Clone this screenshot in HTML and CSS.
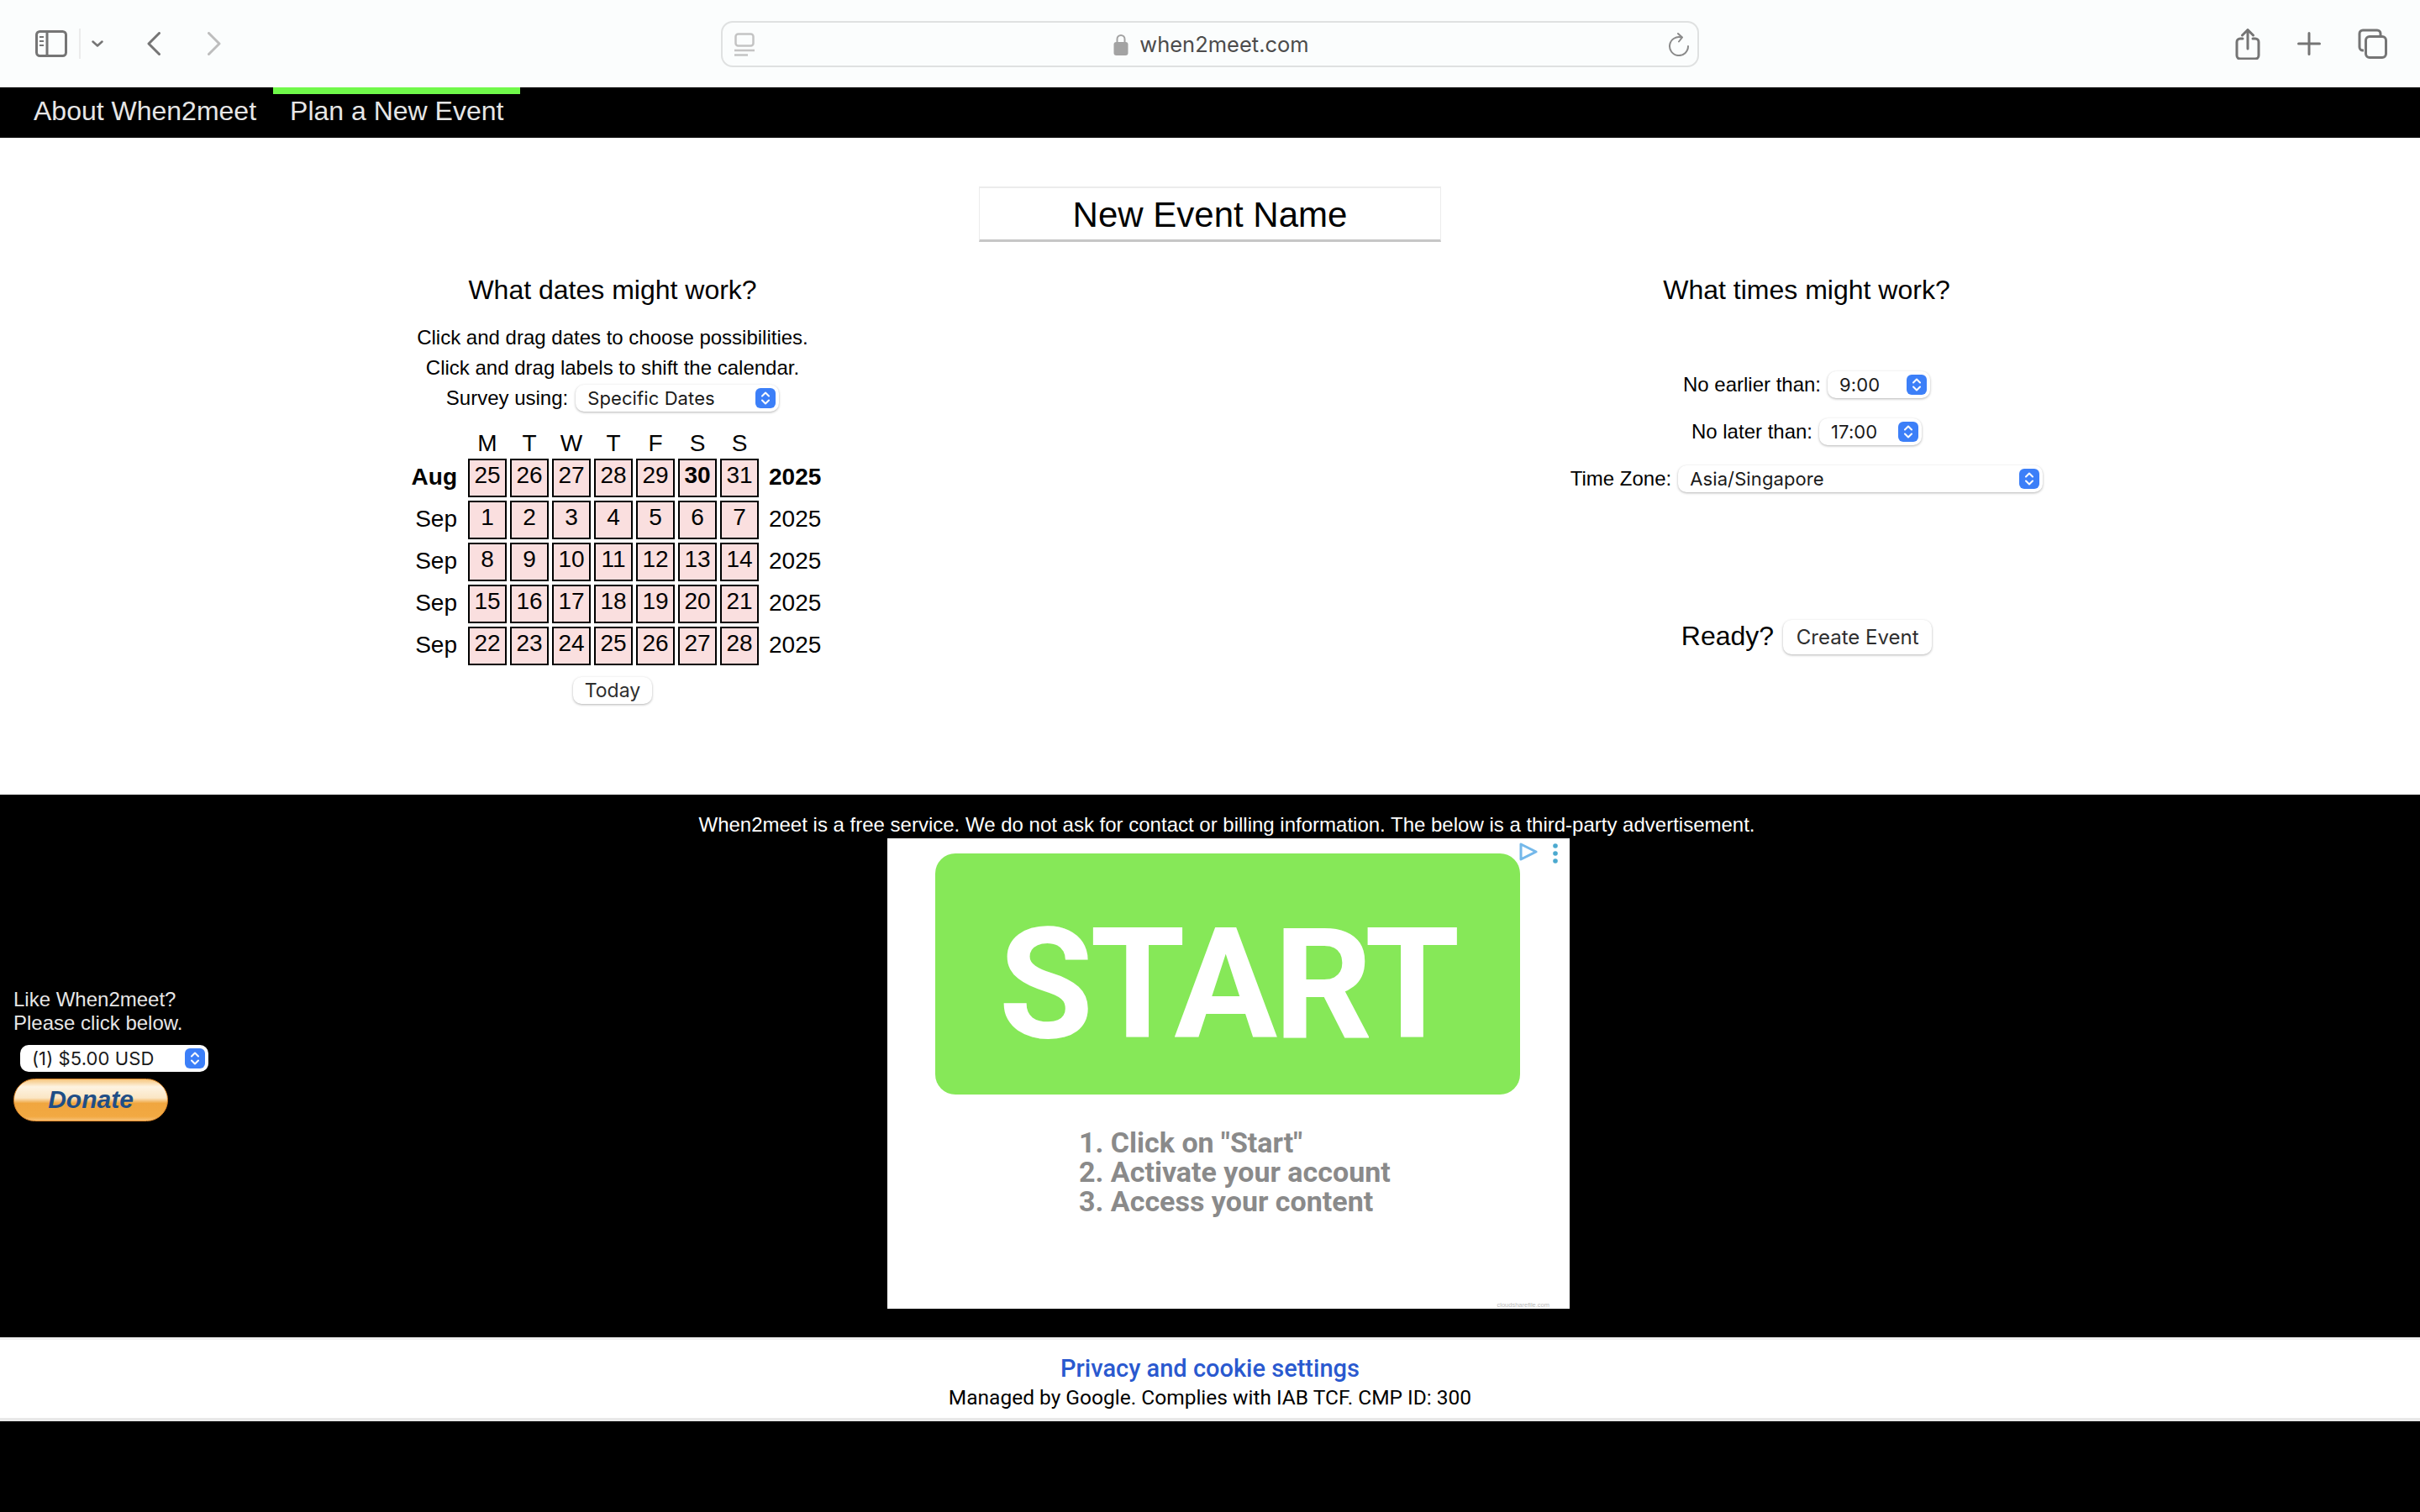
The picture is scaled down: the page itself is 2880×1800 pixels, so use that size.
FILE: index.html
```html
<!DOCTYPE html>
<html lang="en">
<head>
    <meta charset="UTF-8">
    <title>When2meet</title>
    <link rel="stylesheet" href="styles.css">
</head>
<body>
    <!-- browser toolbar -->
    <header class="toolbar">
        <div class="tool-left">
            <svg class="ico-sidebar" width="38" height="32" viewBox="0 0 38 32" fill="none" stroke="#757575" stroke-width="3">
                <rect x="1.5" y="1.5" width="35" height="29" rx="4"/>
                <path d="M14 2v28"/>
                <path d="M5 8h5M5 13h5M5 18h5" stroke-width="2"/>
            </svg>
            <span class="tool-divider"></span>
            <svg class="ico-down" width="14" height="8" viewBox="0 0 14 8" fill="none" stroke="#757575" stroke-width="2.5" stroke-linecap="round" stroke-linejoin="round">
                <path d="M1.5 1.5L7 6.5l5.5-5"/>
            </svg>
            <svg class="ico-back" width="16" height="28" viewBox="0 0 16 28" fill="none" stroke="#757575" stroke-width="3" stroke-linecap="round" stroke-linejoin="round">
                <path d="M14.5 1.5L2 14l12.5 12.5"/>
            </svg>
            <svg class="ico-forward" width="16" height="28" viewBox="0 0 16 28" fill="none" stroke="#bdbdbd" stroke-width="3" stroke-linecap="round" stroke-linejoin="round">
                <path d="M1.5 1.5L14 14 1.5 26.5"/>
            </svg>
        </div>
        <div class="urlbar">
            <svg width="24" height="28" viewBox="0 0 24 28" fill="none" stroke="#c4c4c4" stroke-width="2.5">
                <rect x="1.5" y="1.5" width="21" height="14" rx="3"/>
                <path d="M0 21h24M0 26.500h16"/>
            </svg>
            <div class="url-text">
                <svg width="18" height="26" viewBox="0 0 18 26">
                    <path d="M4.500 11V6.500a4.500 4.500 0 0 1 9 0V11" fill="none" stroke="#a3a3a3" stroke-width="2"/>
                    <rect x="0.500" y="10" width="17" height="16" rx="3" fill="#a3a3a3"/>
                </svg>
                <span>when2meet.com</span>
            </div>
            <svg width="26" height="28" viewBox="0 0 26 28" fill="none" stroke="#8a8a8a" stroke-width="2" stroke-linecap="round" stroke-linejoin="round">
                <path d="M16 5.500a11 11 0 1 0 8 10.500"/>
                <path d="M12 1l5 4.500-4 5"/>
            </svg>
        </div>
        <div class="tool-right">
            <svg width="30" height="37" viewBox="0 0 30 37" fill="none" stroke="#757575" stroke-width="3" stroke-linecap="round" stroke-linejoin="round">
                <path d="M9 12H6a4 4 0 0 0-4 4v16a4 4 0 0 0 4 4h18a4 4 0 0 0 4-4V16a4 4 0 0 0-4-4h-3"/>
                <path d="M15 24V2M8.500 8L15 1.500 21.500 8"/>
            </svg>
            <svg width="28" height="28" viewBox="0 0 28 28" fill="none" stroke="#757575" stroke-width="3" stroke-linecap="round">
                <path d="M14 1.500v25M1.500 14h25"/>
            </svg>
            <svg width="35" height="36" viewBox="0 0 35 36" fill="none" stroke="#757575" stroke-width="3">
                <path d="M7 26H6a4 4 0 0 1-4-4V6a4 4 0 0 1 4-4h17a4 4 0 0 1 4 4v2"/>
                <rect x="9.500" y="9.500" width="24" height="25" rx="4.500"/>
            </svg>
        </div>
    </header>

    <nav class="nav">
        <a class="nav-item">About When2meet</a>
        <a class="nav-item active">Plan a New Event</a>
    </nav>

    <main class="planner">
        <div class="event-name">New Event Name</div>
        <div class="columns">
            <section class="col">
                <h2>What dates might work?</h2>
                <div class="hints">
                    <div>Click and drag dates to choose possibilities.</div>
                    <div>Click and drag labels to shift the calendar.</div>
                    <div class="field">
                        Survey using:
                        <div class="sel sel-survey">
                            <span>Specific Dates</span>
                            <span class="stepper"><svg width="12" height="18" viewBox="0 0 12 18" fill="none" stroke="#fff" stroke-width="2" stroke-linecap="round" stroke-linejoin="round"><path d="M2 6.500L6 2.500l4 4M2 11.500l4 4 4-4"/></svg></span>
                        </div>
                    </div>
                </div>

                <div class="cal">
                    <span></span><b class="dow">M</b><b class="dow">T</b><b class="dow">W</b><b class="dow">T</b><b class="dow">F</b><b class="dow">S</b><b class="dow">S</b><span></span>

                    <span class="month strong">Aug</span>
                    <span class="day">25</span><span class="day">26</span><span class="day">27</span><span class="day">28</span><span class="day">29</span><span class="day strong">30</span><span class="day">31</span>
                    <span class="year strong">2025</span>

                    <span class="month">Sep</span>
                    <span class="day">1</span><span class="day">2</span><span class="day">3</span><span class="day">4</span><span class="day">5</span><span class="day">6</span><span class="day">7</span>
                    <span class="year">2025</span>

                    <span class="month">Sep</span>
                    <span class="day">8</span><span class="day">9</span><span class="day">10</span><span class="day">11</span><span class="day">12</span><span class="day">13</span><span class="day">14</span>
                    <span class="year">2025</span>

                    <span class="month">Sep</span>
                    <span class="day">15</span><span class="day">16</span><span class="day">17</span><span class="day">18</span><span class="day">19</span><span class="day">20</span><span class="day">21</span>
                    <span class="year">2025</span>

                    <span class="month">Sep</span>
                    <span class="day">22</span><span class="day">23</span><span class="day">24</span><span class="day">25</span><span class="day">26</span><span class="day">27</span><span class="day">28</span>
                    <span class="year">2025</span>
                </div>
                <button class="btn btn-today">Today</button>
            </section>

            <section class="col">
                <h2>What times might work?</h2>
                <div class="times">
                    <div class="field">
                        No earlier than:
                        <div class="sel sel-time">
                            <span>9:00</span>
                            <span class="stepper"><svg width="12" height="18" viewBox="0 0 12 18" fill="none" stroke="#fff" stroke-width="2" stroke-linecap="round" stroke-linejoin="round"><path d="M2 6.500L6 2.500l4 4M2 11.500l4 4 4-4"/></svg></span>
                        </div>
                    </div>
                    <div class="field">
                        No later than:
                        <div class="sel sel-time">
                            <span>17:00</span>
                            <span class="stepper"><svg width="12" height="18" viewBox="0 0 12 18" fill="none" stroke="#fff" stroke-width="2" stroke-linecap="round" stroke-linejoin="round"><path d="M2 6.500L6 2.500l4 4M2 11.500l4 4 4-4"/></svg></span>
                        </div>
                    </div>
                    <div class="field">
                        Time Zone:
                        <div class="sel sel-zone">
                            <span>Asia/Singapore</span>
                            <span class="stepper"><svg width="12" height="18" viewBox="0 0 12 18" fill="none" stroke="#fff" stroke-width="2" stroke-linecap="round" stroke-linejoin="round"><path d="M2 6.500L6 2.500l4 4M2 11.500l4 4 4-4"/></svg></span>
                        </div>
                    </div>
                </div>
                <div class="ready">
                    <span class="ready-label">Ready?</span>
                    <button class="btn btn-create">Create Event</button>
                </div>
            </section>
        </div>
    </main>

    <section class="promo">
        <aside class="donate">
            <div class="donate-text">Like When2meet?<br>Please click below.</div>
            <div class="sel sel-amount">
                <span>(1) $5.00 USD</span>
                <span class="stepper"><svg width="12" height="18" viewBox="0 0 12 18" fill="none" stroke="#fff" stroke-width="2" stroke-linecap="round" stroke-linejoin="round"><path d="M2 6.500L6 2.500l4 4M2 11.500l4 4 4-4"/></svg></span>
            </div>
            <div class="donate-btn">Donate</div>
        </aside>
        <div class="promo-center">
            <p class="promo-note">When2meet is a free service. We do not ask for contact or billing information. The below is a third-party advertisement.</p>
            <div class="ad">
                <div class="ad-start">START</div>
                <ol class="ad-steps">
                    <li>1. Click on "Start"</li>
                    <li>2. Activate your account</li>
                    <li>3. Access your content</li>
                </ol>
                <svg class="ad-choice" width="22" height="22" viewBox="0 0 22 22" fill="none" stroke="#74b8ea" stroke-width="3" stroke-linejoin="round">
                    <path d="M2 2v18l18-9z"/>
                </svg>
                <svg class="ad-dots" width="6" height="24" viewBox="0 0 6 24" fill="#4ba9cf">
                    <circle cx="3" cy="3" r="2.800"/><circle cx="3" cy="12" r="2.800"/><circle cx="3" cy="21" r="2.800"/>
                </svg>
                <span class="ad-domain">cloudsharefile.com</span>
            </div>
        </div>
    </section>

    <footer class="consent">
        <a class="consent-link">Privacy and cookie settings</a>
        <div class="consent-note">Managed by Google. Complies with IAB TCF. CMP ID: 300</div>
    </footer>
</body>
</html>
```

FILE: styles.css
```css
* {
    box-sizing: border-box;
}
html, body {
    margin: 0;
    height: 100%;
}
body {
    background: #000;
    color: #000;
    font-family: "Liberation Sans", Arial, sans-serif;
    font-size: 24px;
    overflow: hidden;
}

/* browser toolbar */
.toolbar {
    height: 104px;
    background: #fbfdfd;
    display: grid;
    grid-template-columns: 858px 1164px 1fr;
    align-items: center;
}
.tool-left {
    display: flex;
    align-items: center;
    padding-left: 42px;
}
.tool-divider {
    width: 2px;
    height: 36px;
    background: #ebebeb;
    margin-left: 14px;
}
.ico-down {
    margin-left: 13px;
}
.ico-back {
    margin-left: 52px;
}
.ico-forward {
    margin-left: 56px;
}
.urlbar {
    height: 55px;
    margin-top: 1px;
    border: 2px solid #dfe1e1;
    border-radius: 14px;
    display: flex;
    align-items: center;
    justify-content: space-between;
    padding: 0 9px 0 14px;
}
.url-text {
    display: flex;
    align-items: center;
    gap: 13px;
    font-family: Inter, sans-serif;
    font-size: 25.500px;
    color: #4c4c4c;
}
.tool-right {
    display: flex;
    align-items: center;
    padding-left: 638px;
    gap: 44px;
}

/* site nav */
.nav {
    height: 60px;
    background: #000;
    display: flex;
    padding-left: 20px;
}
.nav-item {
    padding: 2px 20px 0;
    border-top: 8px solid transparent;
    color: #e6e6e6;
    font-size: 32px;
}
.nav-item.active {
    border-top-color: #70f94a;
}

/* planner */
.planner {
    height: 782px;
    background: #fff;
    padding-top: 58px;
}
.event-name {
    width: 550px;
    height: 66px;
    margin: 0 auto;
    border: 1px solid #ececec;
    border-top-width: 2px;
    border-bottom: 3px solid #c6c6c6;
    text-align: center;
    font-size: 42px;
    line-height: 64px;
}
.columns {
    display: flex;
    justify-content: space-between;
    padding: 39px 430px 0 429px;
}
.col {
    width: 600px;
    display: flex;
    flex-direction: column;
    align-items: center;
}
h2 {
    margin: 0;
    font-size: 32px;
    font-weight: normal;
    line-height: 37px;
}
.hints {
    margin-top: 20px;
    line-height: 36px;
    text-align: center;
}
.field {
    display: flex;
    justify-content: center;
    align-items: center;
    gap: 9px;
}
.sel {
    height: 32px;
    background: #fff;
    border-radius: 10px;
    box-shadow: 0 1px 3px rgba(0,0,0,0.3);
    display: flex;
    align-items: center;
    justify-content: space-between;
    padding: 0 4px 0 14px;
    font-family: Inter, sans-serif;
    font-size: 22px;
    letter-spacing: 0.1px;
    color: #1a1a1a;
}
.sel-survey {
    width: 242px;
}
.sel-time {
    width: 122px;
}
.sel-zone {
    width: 434px;
}
.stepper {
    width: 24px;
    height: 24px;
    background: #3c7ff8;
    border-radius: 6px;
    display: flex;
    align-items: center;
    justify-content: center;
}

/* calendar */
.cal {
    width: 100%;
    margin-top: 19px;
    display: grid;
    grid-template-columns: 124px repeat(7, 46px) 1fr;
    grid-template-rows: 31px repeat(5, 46px);
    gap: 4px;
    font-size: 28px;
}
.dow {
    font-weight: normal;
    text-align: center;
    line-height: 34px;
}
.month {
    text-align: right;
    padding-right: 9px;
    line-height: 44px;
}
.year {
    padding-left: 8px;
    line-height: 44px;
}
.day {
    background: #fadfdf;
    border: 2px solid #000;
    text-align: center;
    padding-top: 2px;
    line-height: 32px;
}
.strong {
    font-weight: bold;
}
.btn {
    background: #fff;
    border: none;
    border-radius: 10px;
    box-shadow: 0 1px 3px rgba(0,0,0,0.3);
    font-family: Inter, sans-serif;
    color: #2e2e2e;
    padding: 0;
}
.btn-today {
    width: 94px;
    height: 32px;
    margin-top: 14px;
    font-size: 23px;
}

/* times */
.times {
    margin-top: 78px;
    display: flex;
    flex-direction: column;
    gap: 24px;
}
.times .field {
    gap: 8px;
}
.ready {
    margin-top: 152px;
    display: flex;
    align-items: center;
    gap: 11px;
    font-size: 32px;
    line-height: 37px;
}
.ready-label {
    margin-bottom: 3px;
}
.btn-create {
    width: 177px;
    height: 41px;
    font-size: 24px;
}

/* black band with the ad */
.promo {
    height: 646px;
    background: #000;
    display: grid;
    grid-template-columns: 260px 1fr 220px;
}
.donate {
    padding: 230px 0 0 16px;
    color: #e6e6e6;
}
.donate-text {
    line-height: 28px;
}
.sel-amount {
    width: 224px;
    margin: 12px 0 0 8px;
}
.donate-btn {
    width: 184px;
    height: 51px;
    margin: 8px 0 0 0;
    border-radius: 26px;
    border: 1px solid #e08a2c;
    background: linear-gradient(#f6c67e 0%, #fdf3e2 18%, #fbe6c4 45%, #f0a63f 58%, #f2a942 90%, #f7c074 100%);
    color: #1f4e86;
    font-size: 30px;
    font-weight: bold;
    font-style: italic;
    text-align: center;
    line-height: 48px;
}
.promo-center {
    padding-top: 20px;
    display: flex;
    flex-direction: column;
    align-items: center;
}
.promo-note {
    margin: 0;
    color: #fff;
    line-height: 32px;
    white-space: nowrap;
}
.ad {
    position: relative;
    width: 812px;
    height: 560px;
    margin-left: 4px;
    background: #fff;
    padding: 18px 59px 0 57px;
}
.ad-start {
    height: 287px;
    background: #86e858;
    border-radius: 24px;
    color: #fff;
    display: flex;
    align-items: center;
    justify-content: center;
    padding-top: 26px;
    font-family: Roboto, sans-serif;
    font-size: 183px;
    font-weight: 700;
    letter-spacing: -4px;
    line-height: 1;
}
.ad-steps {
    list-style: none;
    margin: 40px 0 0 171px;
    padding: 0;
    color: #8a8a8a;
    font-family: Roboto, sans-serif;
    font-size: 34px;
    font-weight: 700;
    line-height: 35px;
}
.ad-choice {
    position: absolute;
    top: 5px;
    left: 752px;
}
.ad-dots {
    position: absolute;
    top: 6px;
    left: 792px;
}
.ad-domain {
    position: absolute;
    right: 24px;
    bottom: 0;
    color: #bbb;
    font-size: 7.500px;
}

/* consent footer */
.consent {
    height: 100px;
    background: #fff;
    border-top: 3px solid #eee;
    border-bottom: 4px solid #e8e8e8;
    text-align: center;
    padding-top: 16px;
    font-family: Roboto, sans-serif;
}
.consent-link {
    display: block;
    color: #2a59cf;
    font-size: 29px;
    font-weight: 500;
    line-height: 36px;
}
.consent-note {
    font-size: 24.500px;
    line-height: 34px;
}
```
